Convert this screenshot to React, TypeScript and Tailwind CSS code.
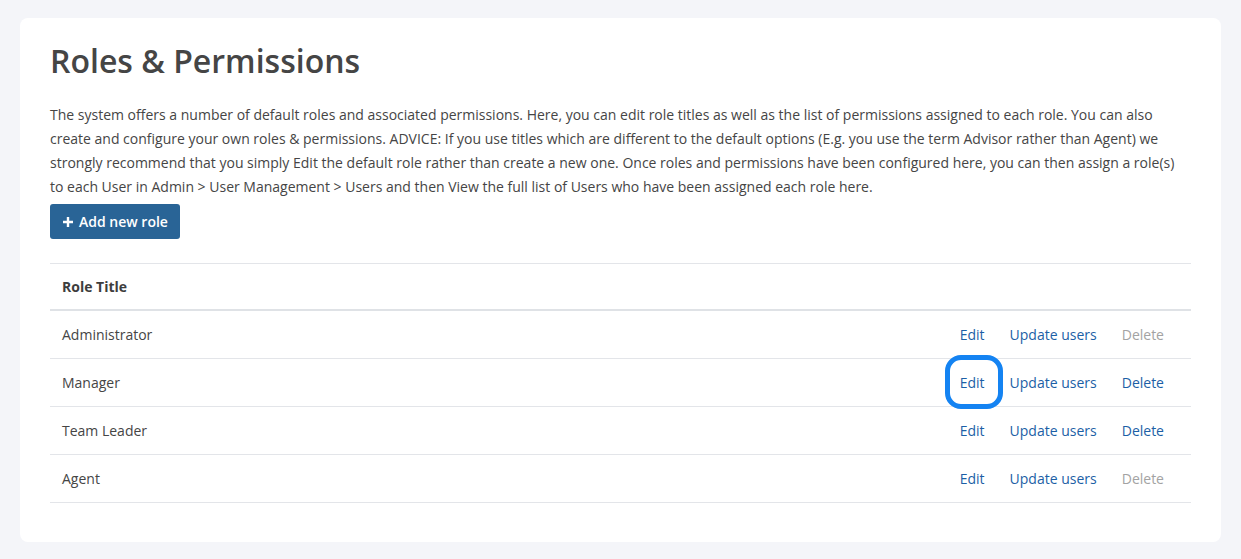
const roles = [
  { title: 'Administrator', canDelete: false },
  { title: 'Manager', canDelete: true, highlight: true },
  { title: 'Team Leader', canDelete: true },
  { title: 'Agent', canDelete: false },
]

function PlusIcon() {
  return (
    <svg width="12" height="12" viewBox="0 0 12 12" className="shrink-0">
      <path d="M6 1v10M1 6h10" stroke="white" strokeWidth="2.4" />
    </svg>
  )
}

export default function App() {
  return (
    <div
      className="min-h-[559px] bg-[#f4f5f9] px-5 pt-[18px] pb-[17px]"
      style={{ fontFamily: '"Open Sans", "Noto Sans", sans-serif' }}
    >
      <div className="rounded-lg bg-white px-[30px] pt-[21px] pb-[39px]">
        <h1 className="text-[32px] leading-[44px] font-semibold text-[#454545]">Roles &amp; Permissions</h1>
        <p className="mt-[20px] text-[14px] leading-[24px] text-[#454545]">
          The system offers a number of default roles and associated permissions. Here, you can edit role titles as well
          as the list of permissions assigned to each role. You can also create and configure your own roles &amp;
          permissions. ADVICE: If you use titles which are different to the default options (E.g. you use the term
          Advisor rather than Agent) we strongly recommend that you simply Edit the default role rather than create a new
          one. Once roles and permissions have been configured here, you can then assign a role(s) to each User in Admin
          &gt; User Management &gt; Users and then View the full list of Users who have been assigned each role here.
        </p>
        <button className="mt-[5px] flex h-[35px] items-center gap-[5px] rounded-[3px] bg-[#296496] px-[12px] text-[14px] font-semibold text-white">
          <PlusIcon />
          Add new role
        </button>
        <div className="mt-6 border-t border-[#e3e5e9]">
          <div className="flex h-[47px] items-center border-b-2 border-[#dfe2e6] px-3 text-[14px] font-bold text-[#3d3d3d]">
            Role Title
          </div>
          {roles.map((r) => (
            <div
              key={r.title}
              className="flex h-[48px] items-center border-b border-[#e3e5e9] pl-3 pr-[27px] text-[14px] text-[#454545]"
            >
              <span className="flex-1">{r.title}</span>
              <div className="flex items-center gap-[25px]">
                <span className="relative text-[#1c5fa6]">
                  Edit
                  {r.highlight && (
                    <span className="absolute -top-[17px] -left-[15px] h-[54px] w-[58px] rounded-[16px] border-[5px] border-[#1483f2]" />
                  )}
                </span>
                <span className="text-[#1c5fa6]">Update users</span>
                <span className={r.canDelete ? 'text-[#1c5fa6]' : 'text-[#a3a3a3]'}>Delete</span>
              </div>
            </div>
          ))}
        </div>
      </div>
    </div>
  )
}
